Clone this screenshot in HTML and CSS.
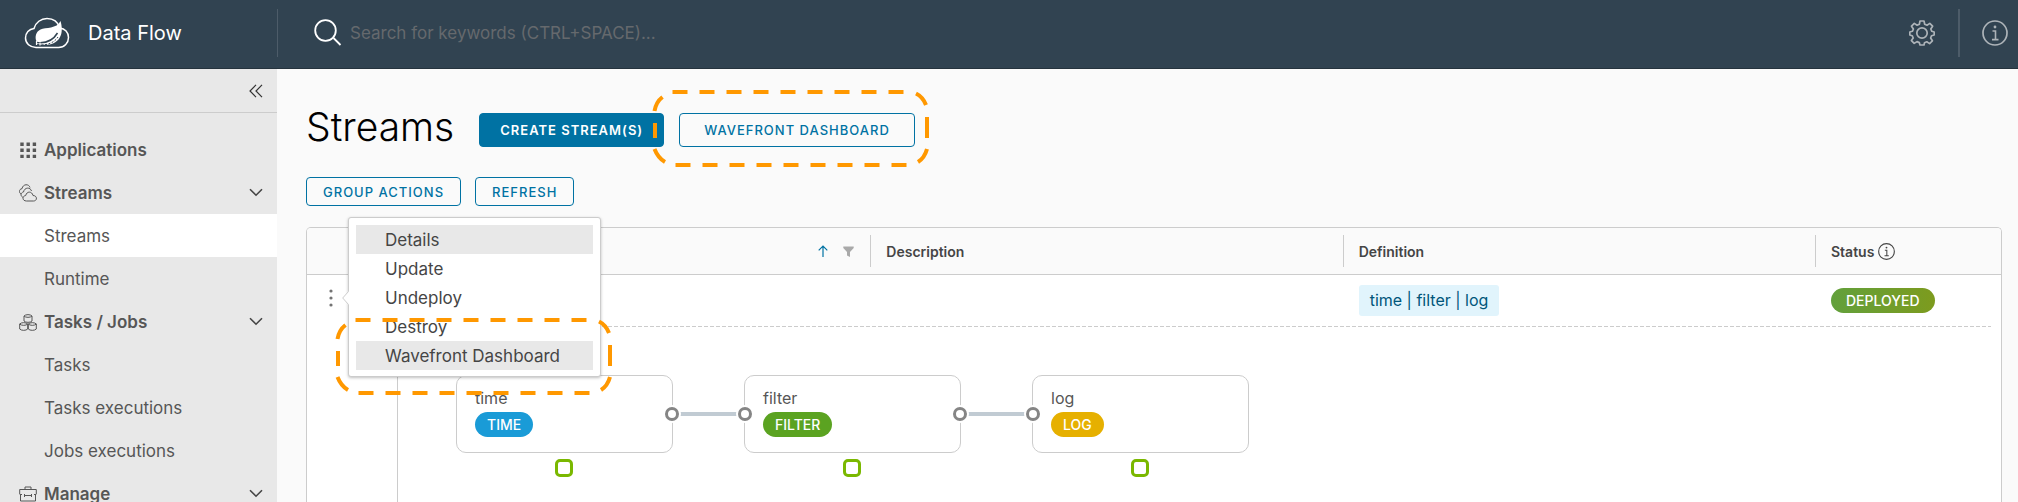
FILE: index.html
```html
<!DOCTYPE html>
<html lang="en">
<head>
<meta charset="utf-8">
<title>Data Flow - Streams</title>
<link rel="stylesheet" href="styles.css">
</head>
<body>
<svg class="defs" aria-hidden="true">
  <symbol id="chevron" viewBox="0 0 14 9"><path d="M1 1.200l6 6 6-6" fill="none" stroke="#454545" stroke-width="1.600"/></symbol>
  <symbol id="highlight" viewBox="0 0 280 81">
    <g fill="none" stroke="#ff9800" stroke-width="4">
      <path d="M21.500 4H253" stroke-dasharray="15 12"/>
      <path d="M24.500 77H256" stroke-dasharray="15 12"/>
      <path d="M4 35v15M276 29v21"/>
      <path d="M3.500 23Q5 14 11.500 9M265 5.500Q272 9 275 17M3.500 61Q7 70 14 74M276 61Q273.500 70 267 74"/>
    </g>
  </symbol>
  <symbol id="info" viewBox="0 0 26 26">
    <circle cx="13" cy="13" r="12" fill="none" stroke="currentColor" stroke-width="1.700"/>
    <path d="M10.500 11h3v8.500M10 19.600h6.500" fill="none" stroke="currentColor" stroke-width="1.600"/>
    <circle cx="13" cy="7" r="1.400" fill="currentColor"/>
  </symbol>
</svg>
<div class="app">
  <header class="topbar">
    <a class="brand" href="#">
      <svg class="logo" viewBox="0 0 46 32" aria-hidden="true">
        <path d="M12 30.500C6 30.500 1.500 26.500 1.500 21c0-5 3.500-9 8.500-9.500C11.500 5.500 17 1.500 23 1.500c6.500 0 11 3.500 12.800 9.500C41 11.500 44.500 15.500 44.500 20.500c0 5.500-4 10-10 10z" fill="none" stroke="#fff" stroke-width="1.500"/>
        <path d="M36.500 4c1.500 5 2.300 12-1 17-3.500 5.500-10 7.500-17 6.700l-5.500-.7-.5-2.500c-2-4.500-.5-10 4-12 5-2.300 16.500-.5 20-8.500z" fill="#fff"/>
        <path d="M13 25.500c9 1 16-2 20.500-9.500" fill="none" stroke="#314351" stroke-width="1.500"/>
        <path d="M14 28c9 .5 16-2 20-8" fill="none" stroke="#314351" stroke-width="1" stroke-dasharray="2 1.500"/>
        <path d="M12.500 24v4M16 25.500v3" stroke="#fff" stroke-width="1.200"/>
      </svg>
      <span>Data Flow</span>
    </a>
    <form class="search">
      <svg class="search-icon" viewBox="0 0 28 28" aria-hidden="true"><g fill="none" stroke="#fff" stroke-width="1.800"><circle cx="11.500" cy="11.500" r="10.300"/><path d="M19.500 19l7 7"/></g></svg>
      <input class="search-input" type="text" aria-label="Search" placeholder="Search for keywords (CTRL+SPACE)...">
    </form>
    <button class="icon-button settings" type="button" aria-label="Settings">
      <svg viewBox="0 0 26 26" aria-hidden="true"><g fill="none" stroke="currentColor" stroke-width="1.700" stroke-linejoin="round"><circle cx="13" cy="13" r="5.200"/><path d="M11 1h4l.7 3.200 2.300 1 2.800-1.800 2.800 2.800L21.800 9l1 2.300L25.200 12v3l-2.600.7-1 2.300 1.800 2.800-2.800 2.800-2.800-1.800-2.300 1L15 25h-4l-.7-2.400-2.300-1-2.800 1.800-2.800-2.800L4.200 18l-1-2.300L.8 15v-3l2.600-.7 1-2.300-1.900-2.800 2.800-2.800L8.100 5.200l2.300-1z"/></g></svg>
    </button>
    <button class="icon-button about" type="button" aria-label="About"><svg aria-hidden="true"><use href="#info"/></svg></button>
  </header>
  <div class="body">
    <nav class="sidebar">
      <div class="collapse">
        <button class="plain" type="button" aria-label="Collapse"><svg class="collapse-icon" viewBox="0 0 14 14" aria-hidden="true"><path d="M7 .8L1 7l6 6.200M13 .8L7 7l6 6.200" fill="none" stroke="#333" stroke-width="1.200"/></svg></button>
      </div>
      <a class="item group" href="#">
        <svg class="item-icon" viewBox="0 0 18 18" aria-hidden="true"><path d="M3 1.500v16M9.200 1.500v16M15.400 1.500v16" fill="none" stroke="#565656" stroke-width="3.400" stroke-dasharray="3.400 2.700"/></svg>
        <span>Applications</span>
      </a>
      <a class="item group" href="#">
        <svg class="item-icon" viewBox="0 0 18 18" aria-hidden="true"><g fill="#e8e8e8" stroke="#565656"><path d="M3 10.500C-.5 9.500-.3 5 3 4.700 4-.5 10-.2 11 3.500"/><path d="M4.500 13.500C1 12.500 1.500 8.500 4.500 8 5.500 3 11.500 3 12.500 7"/><path d="M7.500 17c-4.500 0-4.500-5 -.8-5.500C7.700 7 13 7 14 11.500c4.500 0 4.500 5.500.5 5.500z"/></g></svg>
        <span>Streams</span><svg class="chevron"><use href="#chevron"/></svg>
      </a>
      <a class="item active" href="#">Streams</a>
      <a class="item" href="#">Runtime</a>
      <a class="item group" href="#">
        <svg class="item-icon" viewBox="0 0 18 18" aria-hidden="true"><g fill="none" stroke="#565656"><path d="M5 3v5c1.500 1.800 6.500 1.800 8 0V3c-1.500-1.800-6.500-1.800-8 0c1.500 1.800 6.500 1.800 8 0M.7 11v5c1.500 1.800 6.500 1.800 8 0v-5c-1.500-1.800-6.500-1.800-8 0c1.500 1.800 6.500 1.800 8 0M9.300 11v5c1.500 1.800 6.500 1.800 8 0v-5c-1.500-1.800-6.500-1.800-8 0c1.500 1.800 6.500 1.800 8 0"/></g></svg>
        <span>Tasks / Jobs</span><svg class="chevron"><use href="#chevron"/></svg>
      </a>
      <a class="item" href="#">Tasks</a>
      <a class="item" href="#">Tasks executions</a>
      <a class="item" href="#">Jobs executions</a>
      <a class="item group" href="#">
        <svg class="item-icon" viewBox="0 0 18 18" aria-hidden="true"><g fill="none" stroke="#565656"><path d="M.7 9V4.500h16.600V9M1.500 10v6h15v-6M6 4.500V2h6v2.500M.7 9.500H3M5 10.500h8M5.500 9v3M12.500 9v3M15 9.500h2.300"/></g></svg>
        <span>Manage</span><svg class="chevron"><use href="#chevron"/></svg>
      </a>
    </nav>
    <main class="content">
      <div class="title-row">
        <h1>Streams</h1>
        <button class="btn primary" type="button">Create Stream(s)</button>
        <div class="anchor">
          <button class="btn wide" type="button">Wavefront Dashboard</button>
          <svg class="highlight on-button" aria-hidden="true"><use href="#highlight"/></svg>
        </div>
      </div>
      <div class="toolbar">
        <button class="btn small" type="button">Group Actions</button>
        <button class="btn small" type="button">Refresh</button>
      </div>
      <div class="grid">
        <table>
          <thead>
            <tr>
              <th class="col-actions"></th>
              <th><div class="sorters">
                <svg class="sort" viewBox="0 0 10 12" aria-hidden="true"><path d="M5 12V1M.7 5.300L5 1l4.300 4.300" fill="none" stroke="#0072a3" stroke-width="1.200"/></svg>
                <svg class="filter" viewBox="0 0 11 11" aria-hidden="true"><path d="M.3.500h10.400v1.500L7 6v5L4 9.500V6L.3 2z" fill="#a9a9a9"/></svg>
              </div></th>
              <th><div class="cell">Description</div></th>
              <th><div class="cell">Definition</div></th>
              <th class="col-status"><div class="cell">Status <svg class="status-info" viewBox="0 0 26 26" aria-hidden="true"><use href="#info" width="26" height="26"/></svg></div></th>
            </tr>
          </thead>
          <tbody>
            <tr class="row">
              <td class="actions" rowspan="2">
                <div class="anchor">
                  <button class="plain dots" type="button" aria-label="Row actions"><svg viewBox="0 0 4 18" aria-hidden="true"><g fill="#737373"><circle cx="2" cy="2" r="1.600"/><circle cx="2" cy="9" r="1.600"/><circle cx="2" cy="16" r="1.600"/></g></svg></button>
                  <div class="menu">
                    <svg class="pointer" viewBox="0 0 7 14" aria-hidden="true"><path d="M7 0v14L.7 7z" fill="#fff"/><path d="M6.500.5L.7 7l5.800 6.500" fill="none" stroke="#ccc"/></svg>
                    <button class="menu-item selected" type="button">Details</button>
                    <button class="menu-item" type="button">Update</button>
                    <button class="menu-item" type="button">Undeploy</button>
                    <button class="menu-item" type="button">Destroy</button>
                    <button class="menu-item selected" type="button">Wavefront Dashboard</button>
                    <svg class="highlight on-menu" aria-hidden="true"><use href="#highlight"/></svg>
                  </div>
                </div>
              </td>
              <td></td>
              <td></td>
              <td><span class="dsl">time | filter | log</span></td>
              <td><span class="badge deployed">DEPLOYED</span></td>
            </tr>
            <tr>
              <td class="detail" colspan="4">
                <div class="dashes"></div>
                <div class="flow">
                  <div class="node source"><span>time</span><span class="badge blue">TIME</span></div>
                  <div class="link"></div>
                  <div class="node processor"><span>filter</span><span class="badge green">FILTER</span></div>
                  <div class="link"></div>
                  <div class="node sink"><span>log</span><span class="badge yellow">LOG</span></div>
                </div>
              </td>
            </tr>
          </tbody>
        </table>
      </div>
    </main>
  </div>
</div>
</body>
</html>
```
FILE: styles.css
```css
*, *::before, *::after { box-sizing: border-box; }
body { margin: 0; font-family: Inter, "Open Sans", sans-serif; font-size: 16px; color: #565656; }
button, input { font: inherit; }
a { color: inherit; text-decoration: none; }
svg { display: block; flex: none; }
.defs { position: absolute; width: 0; height: 0; }
.app { display: flex; flex-direction: column; height: 100vh; overflow: hidden; }

.topbar { display: flex; align-items: center; flex: none; height: 69px; padding-bottom: 3px; background: #314351; border-bottom: 1px solid #25333d; }
.brand { display: flex; align-items: center; gap: 18px; width: 278px; height: 48px; padding-left: 24px; border-right: 1px solid #4d5c69; color: #fff; font-size: 20px; }
.logo { width: 46px; height: 32px; }
.search { display: flex; align-items: center; flex: 1; gap: 8px; padding-left: 36px; }
.search-icon { width: 28px; height: 28px; }
.search-input { flex: 1; padding: 0; border: 0; outline: 0; background: none; color: #fff; font-size: 17px; }
.search-input::placeholder { color: #65696d; opacity: 1; }
.icon-button { display: flex; align-items: center; height: 48px; border: 0; background: none; color: #adb3b8; }
.icon-button svg { width: 26px; height: 26px; }
.settings { padding: 0 23px 0 0; border-right: 2px solid #4d5c69; }
.about { padding: 0 10px 0 22px; }

.body { display: flex; flex: 1; min-height: 0; }
.sidebar { flex: none; width: 277px; background: #e8e8e8; }
.collapse { display: flex; align-items: center; justify-content: flex-end; height: 44px; margin-bottom: 15px; padding-right: 14px; border-bottom: 1px solid #ccc; }
.plain { display: block; padding: 0; border: 0; background: none; }
.collapse-icon { width: 14px; height: 14px; }
.item { display: flex; align-items: center; height: 43px; padding: 0 14px 0 44px; font-size: 17px; }
.group { gap: 7px; padding-left: 19px; font-weight: 600; }
.active { background: #fff; }
.item-icon { width: 18px; height: 18px; }
.chevron { width: 14px; height: 9px; margin-left: auto; }

.content { display: flex; flex: 1; flex-direction: column; min-width: 0; padding: 34px 16px 0 29px; background: #fafafa; }
.title-row { display: flex; align-items: center; gap: 15px; height: 53px; }
h1 { margin: 0 10px 0 0; padding-bottom: 6px; color: #000; font-size: 39px; font-weight: 300; line-height: 47px; }
.anchor { position: relative; }
.btn { display: block; height: 34px; padding: 0 20px; border: 1px solid #0072a3; border-radius: 4px; background: none; color: #0072a3; font-size: 13px; font-weight: 500; letter-spacing: 1px; text-transform: uppercase; white-space: nowrap; }
.primary { background: #0072a3; color: #fff; font-weight: 600; }
.wide { padding: 0 24px; }
.small { height: 29px; padding: 0 16px; }
.toolbar { display: flex; gap: 14px; margin: 21px 0; }
.highlight { position: absolute; width: 280px; height: 81px; pointer-events: none; }
.on-button { top: -25px; left: -28px; }
.on-menu { top: 98px; left: -15px; }

.grid { flex: 1; min-height: 0; border: 1px solid #ccc; border-bottom: 0; border-radius: 5px 5px 0 0; background: #fff; }
table { width: 100%; border-collapse: separate; border-spacing: 0; table-layout: fixed; }
th { height: 47px; padding: 0; border-bottom: 1px solid #ccc; background: #fafafa; color: #454545; font-size: 14px; font-weight: 600; text-align: left; }
th:first-child { border-radius: 4px 0 0; }
th:last-child { border-radius: 0 4px 0 0; }
.col-actions { width: 91px; }
.col-status { width: 186px; }
.cell { display: flex; align-items: center; gap: 4px; height: 32px; padding-left: 15px; border-left: 1px solid #ccc; }
.sorters { display: flex; align-items: center; justify-content: flex-end; gap: 15px; padding-right: 16px; }
.sort { width: 10px; height: 12px; }
.filter { width: 11px; height: 11px; }
.status-info { width: 17px; height: 17px; }
td { padding: 0; }
.row td { height: 51px; padding-left: 16px; }
.row .actions { padding: 14px 0 0 22px; border-right: 1px solid #ccc; vertical-align: top; }
.dots { width: 4px; height: 18px; }
.dots svg { width: 4px; height: 18px; }
.dsl { display: inline-block; padding: 0 11px; border-radius: 3px; background: #e1f4fc; color: #00567a; font-size: 16px; line-height: 31px; }
.badge { display: block; width: max-content; padding: 0 12px; border-radius: 13px; color: #fff; font-size: 14px; font-weight: 500; line-height: 25px; }
.deployed { padding: 0 15px; background: linear-gradient(90deg, #62a03c, #7d9b1e); }
.blue { background: #1a9bd7; }
.green { background: #5ba321; }
.yellow { background: #e6b000; }

.menu { position: absolute; z-index: 2; top: -72px; left: 19px; width: 253px; padding: 7px 7px 6px; border: 1px solid #ccc; border-radius: 3px; background: #fff; box-shadow: 0 1px 3px rgba(0, 0, 0, .25); }
.pointer { position: absolute; top: 73px; left: -7px; width: 7px; height: 14px; }
.menu-item { display: block; width: 100%; height: 29px; padding: 0 29px; border: 0; background: none; color: #454545; font-size: 17px; text-align: left; white-space: nowrap; }
.selected { background: #e8e8e8; }

.detail { height: 200px; vertical-align: top; }
.dashes { height: 1px; margin-right: 10px; background: repeating-linear-gradient(90deg, #ccc 0 4px, transparent 4px 6px); }
.flow { display: flex; align-items: center; padding: 48px 0 0 58px; }
.node { position: relative; display: flex; flex-direction: column; gap: 3px; width: 217px; height: 78px; padding: 12px 18px; border: 1px solid #ccc; border-radius: 10px; font-size: 16px; line-height: 21px; }
.node::after { content: ""; position: absolute; top: 83px; left: 98px; width: 18px; height: 18px; border: 3px solid #7ab800; border-radius: 5px; }
.link { position: relative; width: 71px; height: 4px; background: #c1cbd3; }
.link::before, .link::after { content: ""; position: absolute; z-index: 1; top: -5px; width: 14px; height: 14px; border: 3px solid #858585; border-radius: 50%; background: #fff; box-shadow: 0 0 0 2px #fff; }
.link::before { left: -8px; }
.link::after { right: -8px; }
```
